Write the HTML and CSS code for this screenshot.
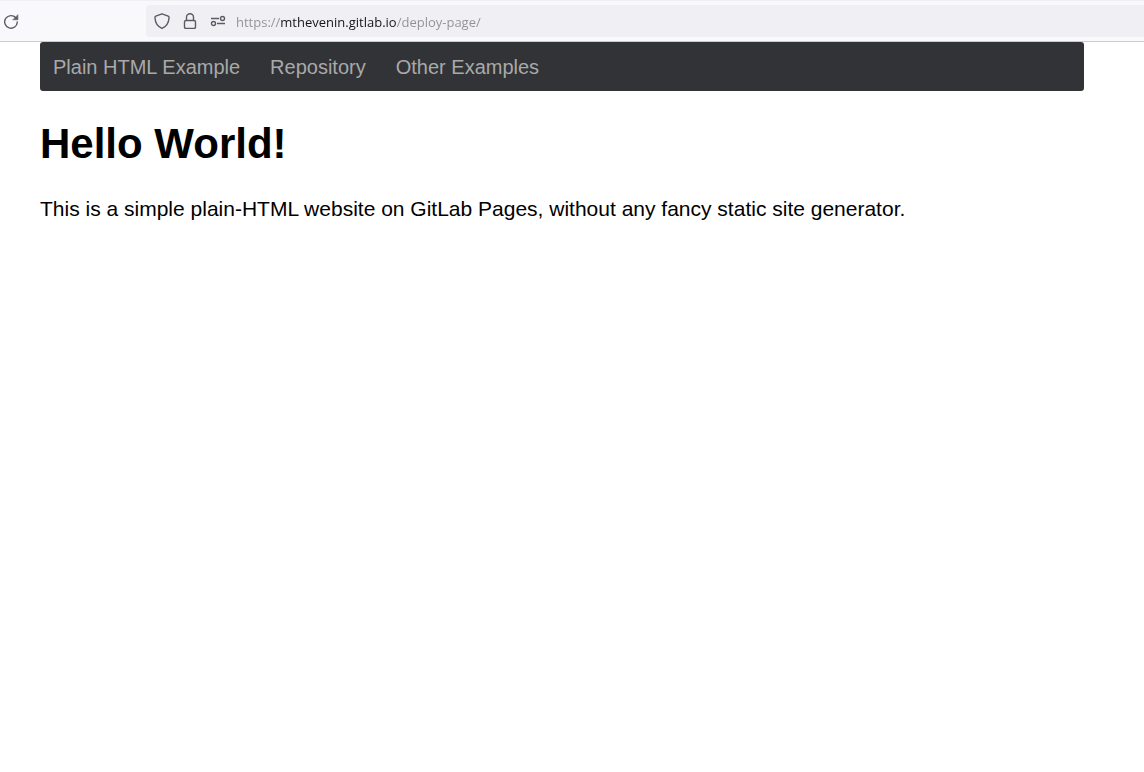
FILE: index.html
```html
<!DOCTYPE html>
<html lang="en">
<head>
<meta charset="utf-8">
<meta name="viewport" content="width=device-width, initial-scale=1">
<title>Plain HTML Example</title>
<link rel="stylesheet" href="styles.css">
</head>
<body>
<header class="toolbar">
  <button class="icon-button reload" type="button" aria-label="Reload">
    <svg width="16" height="16" viewBox="0 0 16 16" fill="none" stroke="currentColor" stroke-width="1.4" stroke-linecap="round"><path d="M12.8 4.8A6.3 6.3 0 1 0 14.3 9"/><path d="M14.9 2v4.8h-4.8z" fill="currentColor" stroke-width=".6" stroke-linejoin="round"/></svg>
  </button>
  <div class="address">
    <button class="icon-button" type="button" aria-label="Tracking protection">
      <svg width="16" height="16" viewBox="0 0 16 16" fill="none" stroke="currentColor" stroke-width="1.4" stroke-linejoin="round"><path d="M8 .8 14.2 3.2Q15.2 3.6 15 5C14.7 10 12.3 13.6 8 15.4 3.7 13.6 1.3 10 1 5Q.8 3.6 1.8 3.2Z"/></svg>
    </button>
    <button class="icon-button" type="button" aria-label="Connection secure">
      <svg width="16" height="16" viewBox="0 0 16 16" fill="none" stroke="currentColor" stroke-width="1.4"><rect x="2.5" y="7.5" width="11" height="8" rx="1.5"/><path d="M4.5 7.5V4.2a3.5 3.5 0 0 1 7 0v3.3"/></svg>
    </button>
    <button class="icon-button" type="button" aria-label="Site permissions">
      <svg width="16" height="16" viewBox="0 0 16 16" fill="none" stroke="currentColor" stroke-width="1.4"><path d="M1 5.5h8M7 10.5h8"/><circle cx="12.5" cy="5.5" r="2"/><circle cx="3.5" cy="10.5" r="2"/></svg>
    </button>
    <input class="url" type="text" aria-label="Address" value="https://mthevenin.gitlab.io/deploy-page/" spellcheck="false">
  </div>
</header>
<div class="page">
  <nav class="navbar">
    <a href="#">Plain HTML Example</a>
    <a href="#">Repository</a>
    <a href="#">Other Examples</a>
  </nav>
  <main>
    <h1>Hello World!</h1>
    <p>This is a simple plain-HTML website on GitLab Pages, without any fancy static site generator.</p>
  </main>
</div>
</body>
</html>
```
FILE: styles.css
```css
* {
  box-sizing: border-box;
}

body {
  margin: 0;
  background: #fff;
  color: #000;
  font-family: "Liberation Sans", Arial, sans-serif;
}

.toolbar {
  display: flex;
  align-items: center;
  padding: 4px 0 4px 3px;
  border-top: 1px solid #f0f0f4;
  border-bottom: 1px solid #cccccf;
  background: #f9f9fb;
}

.icon-button {
  display: flex;
  flex: none;
  padding: 0;
  border: 0;
  background: none;
  color: #5b5b66;
}

.address {
  display: flex;
  flex: 1;
  align-items: center;
  gap: 12px;
  height: 32px;
  margin-left: 127px;
  padding-left: 8px;
  border-radius: 4px 0 0 4px;
  background: #f0f0f4;
}

/* The host part of the address is darker than the scheme and the path. */
.url {
  flex: 1;
  min-width: 0;
  margin-left: -2px;
  padding: 2px 0 0;
  border: 0;
  outline: 0;
  background: linear-gradient(to right, #8f8f98 44px, #15141a 44px 161px, #8f8f98 161px);
  background-clip: text;
  -webkit-background-clip: text;
  color: transparent;
  caret-color: #15141a;
  font: 13px/20px "Open Sans", "Noto Sans", sans-serif;
}

.page {
  padding: 0 60px 0 40px;
}

.navbar {
  display: flex;
  gap: 30px;
  padding: 14px 13px 12px;
  border-radius: 3px;
  background: #323336;
}

.navbar a {
  color: #a9a9a9;
  font-size: 20px;
  line-height: 23px;
  text-decoration: none;
}

h1 {
  margin: 29px 0 27px;
  font-size: 42px;
  line-height: 48px;
}

p {
  margin: 0;
  font-size: 21px;
  line-height: 28px;
}
```
